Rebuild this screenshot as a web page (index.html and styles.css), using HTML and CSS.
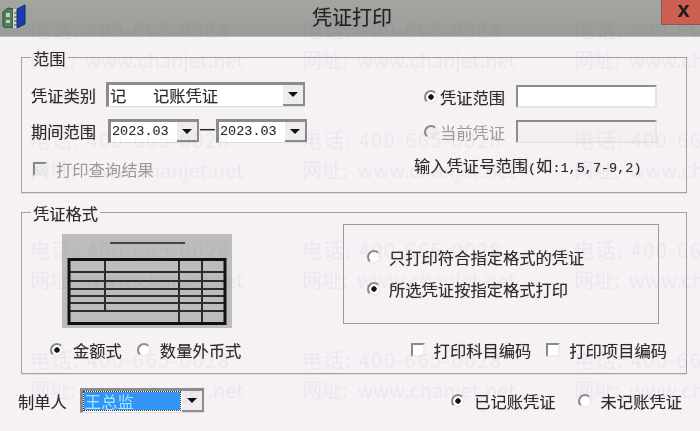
FILE: index.html
```html
<!doctype html>
<html lang="zh-CN">
<head>
    <meta charset="utf-8">
    <title>凭证打印</title>
    <link rel="stylesheet" href="styles.css">
</head>
<body>
<div class="dialog">
    <div class="titlebar">
        <svg class="app-icon" width="24" height="24" viewBox="0 0 24 24">
            <path d="M1 8 L6 4 L11 5 L11 24 L3 24 L1 22 Z" fill="#4f7f5c" stroke="#2c4a34" stroke-width="1"/>
            <path d="M4 9 h4 v4 h-4 z M4 16 h4 v3 h-4 z" fill="#c9cdbd"/>
            <path d="M11 5 L15 5 L15 24 L11 24 Z" fill="#d4d6cc"/>
            <path d="M15 5 L23 1 L23 20 L15 24 Z" fill="#1a3cae" stroke="#12296e" stroke-width="1"/>
            <path d="M12 9 h3 M12 13 h3 M12 17 h3 M12 21 h3" stroke="#444" stroke-width="1"/>
        </svg>
        <span class="title">凭证打印</span>
        <span class="close">x</span>
    </div>

    <fieldset class="group group-range">
        <legend>范围</legend>
        <div class="range-left">
            <div class="field">
                <label class="lbl">凭证类别</label>
                <div class="combo combo-type"><span class="val"><span class="code">记</span>记账凭证</span><span class="arrow"></span></div>
            </div>
            <div class="field">
                <label class="lbl">期间范围</label>
                <div class="combo combo-date"><span class="val num">2023.03</span><span class="arrow"></span></div>
                <span class="dash">一</span>
                <div class="combo combo-date"><span class="val num">2023.03</span><span class="arrow"></span></div>
            </div>
            <div class="opt opt-query disabled"><span class="check"></span>打印查询结果</div>
        </div>
        <div class="range-right">
            <div class="field">
                <div class="opt opt-range"><span class="radio on"></span>凭证范围</div>
                <div class="textbox"></div>
            </div>
            <div class="field">
                <div class="opt opt-range disabled"><span class="radio"></span>当前凭证</div>
                <div class="textbox off"></div>
            </div>
            <div class="hint">输入凭证号范围<span class="num">(</span>如<span class="num">:1,5,7-9,2)</span></div>
        </div>
    </fieldset>

    <fieldset class="group group-format">
        <legend>凭证格式</legend>
        <div class="format-top">
            <svg class="preview" width="170" height="94" viewBox="0 0 170 94">
                <rect width="170" height="94" fill="#bcbcbc"/>
                <path d="M48 9 H123" stroke="#444" stroke-width="2"/>
                <path d="M6 38 H164 M6 47 H164 M6 55 H164 M6 62 H164 M6 69 H164 M6 77 H164" stroke="#2c2c2c" stroke-width="2" fill="none"/>
                <path d="M43 25 V77 M117 25 V89 M140 25 V89" stroke="#2c2c2c" stroke-width="2"/>
                <rect x="7" y="25.5" width="156" height="64" fill="none" stroke="#111" stroke-width="3"/>
            </svg>
            <div class="format-box">
                <div class="opt"><span class="radio"></span>只打印符合指定格式的凭证</div>
                <div class="opt"><span class="radio on"></span>所选凭证按指定格式打印</div>
            </div>
        </div>
        <div class="format-bottom">
            <div class="opt"><span class="radio on"></span>金额式</div>
            <div class="opt"><span class="radio"></span>数量外币式</div>
            <div class="opt push"><span class="check"></span>打印科目编码</div>
            <div class="opt"><span class="check"></span>打印项目编码</div>
        </div>
    </fieldset>

    <div class="footer">
        <label class="lbl">制单人</label>
        <div class="combo combo-user"><span class="val selected">王总监</span><span class="arrow"></span></div>
        <div class="opt push"><span class="radio on"></span>已记账凭证</div>
        <div class="opt"><span class="radio"></span>未记账凭证</div>
    </div>

    <div class="watermark">
        <span>电话: 400-665-0028</span><span>电话: 400-665-0028</span><span>电话: 400-665-0028</span>
        <span class="url">网址: www.chanjet.net</span><span class="url">网址: www.chanjet.net</span><span class="url">网址: www.chanjet.net</span>
        <span>电话: 400-665-0028</span><span>电话: 400-665-0028</span><span>电话: 400-665-0028</span>
        <span class="url">网址: www.chanjet.net</span><span class="url">网址: www.chanjet.net</span><span class="url">网址: www.chanjet.net</span>
        <span>电话: 400-665-0028</span><span>电话: 400-665-0028</span><span>电话: 400-665-0028</span>
        <span class="url">网址: www.chanjet.net</span><span class="url">网址: www.chanjet.net</span><span class="url">网址: www.chanjet.net</span>
        <span>电话: 400-665-0028</span><span>电话: 400-665-0028</span><span>电话: 400-665-0028</span>
        <span class="url">网址: www.chanjet.net</span><span class="url">网址: www.chanjet.net</span><span class="url">网址: www.chanjet.net</span>
    </div>
</div>
</body>
</html>
```

FILE: styles.css
```css
html, body {
    margin: 0;
    height: 100%;
    overflow: hidden;
}

.dialog {
    position: relative;
    width: 700px;
    height: 431px;
    overflow: hidden;
    background: #f5f1f5;
    color: #2b2b2b;
    font-family: "Noto Sans CJK SC", "Liberation Sans", sans-serif;
    font-size: 16.3px;
    line-height: 20px;
    text-shadow: 0 0 1px rgba(0, 0, 0, 0.3);
    filter: blur(0.45px);
}

.num {
    font-family: "Liberation Mono", monospace;
    font-size: 13.5px;
}

/* title bar */
.titlebar {
    display: flex;
    align-items: flex-start;
    height: 37px;
    background: linear-gradient(#a3a5a1, #999c98);
    border-bottom: 1px solid #b9bab9;
    box-sizing: border-box;
}

.app-icon {
    margin: 4px 0 0 2px;
}

.title {
    margin: 7px 0 0 286px;
    font-size: 20px;
    color: #222;
}

.close {
    margin-left: auto;
    width: 39px;
    height: 25px;
    box-sizing: border-box;
    padding-left: 5px;
    background: #cc5f4f;
    border-left: 1px solid #8c5a50;
    border-bottom: 1px solid #8c5a50;
    color: #1c1c1c;
    text-align: center;
    text-shadow: none;
    font: bold 22px/20px "Liberation Sans", sans-serif;
}

/* group boxes */
.group {
    display: flex;
    margin: 9px 13px 0 21px;
    padding: 0 9px;
    border: 1px solid #a2a2a2;
    box-shadow: 0 1px 0 #e0dde0;
    min-width: 0;
}

.group legend {
    padding: 0 2px;
    height: 22px;
    line-height: 24px;
}

.group-range {
    padding-top: 14px;
    padding-bottom: 13px;
}

.group-format {
    display: block;
    margin-top: 8px;
    padding-top: 0;
    padding-bottom: 13px;
}

.range-left {
    width: 383px;
}

.field {
    display: flex;
    align-items: center;
    margin-bottom: 12px;
}

.lbl {
    width: 75px;
    flex: none;
}

/* combos */
.combo {
    display: flex;
    align-items: flex-start;
    flex: none;
    box-sizing: border-box;
    height: 25px;
    background: #fff;
    border: 3px solid #8c8c8c;
    border-right: 0;
    border-bottom: 1px solid #dcdadc;
}

.combo .val {
    flex: 1;
    min-width: 0;
    padding-left: 1px;
    white-space: nowrap;
}

.code {
    display: inline-block;
    width: 43px;
}

.arrow {
    position: relative;
    flex: none;
    width: 22px;
    height: 21px;
    background: #eeecee;
    border-right: 2px solid #8c8c8c;
    border-bottom: 2px solid #8c8c8c;
    box-sizing: border-box;
}

.arrow::after {
    content: "";
    position: absolute;
    left: 5px;
    top: 7px;
    border: 5px solid transparent;
    border-top: 5px solid #111;
    border-bottom: 0;
}

.combo-type {
    width: 199px;
}

.combo-date {
    width: 91px;
    height: 24px;
}

.combo-date .arrow {
    height: 20px;
}

.combo-date:first-of-type {
    margin-left: 2px;
}

.dash {
    align-self: flex-start;
    width: 17px;
    text-align: center;
    overflow: hidden;
}

.combo-user {
    width: 124px;
}

.combo-user .val.selected {
    margin: 1px 2px 0 1px;
    background: #3295f5;
    color: #a8e6ff;
    outline: 1px dotted #333;
    line-height: 18px;
    text-shadow: none;
}

/* options */
.opt {
    display: flex;
    align-items: center;
    white-space: nowrap;
}

.disabled {
    color: #9b9b9b;
    text-shadow: none;
}

.radio, .check {
    flex: none;
    box-sizing: border-box;
    width: 14px;
    height: 14px;
    margin-right: 9px;
    background: #fff;
    border: 2px solid #8a8a8a;
    border-right-color: #ececec;
    border-bottom-color: #ececec;
}

.radio {
    border-radius: 50%;
}

.radio.on {
    background: radial-gradient(circle, #111 0 2.4px, #fff 3px);
}

.disabled .radio, .disabled .check {
    background: #f0edf0;
}

.opt-query {
    margin: 16px 0 0 2px;
}

.range-right {
    flex: 1;
    padding-top: 3px;
}

.opt-range {
    width: 92px;
    margin-left: 10px;
    flex: none;
}

.opt-range .radio {
    margin-right: 2px;
}

.textbox {
    box-sizing: border-box;
    width: 141px;
    height: 23px;
    background: #fff;
    border: 2px solid #8c8c8c;
    border-right-color: #e6e4e6;
    border-bottom-color: #e6e4e6;
}

.textbox.off {
    background: #f3eff3;
}

.hint {
    margin-top: 8px;
    white-space: nowrap;
}

/* format group */
.format-top {
    display: flex;
    align-items: flex-start;
    margin-top: 1px;
}

.preview {
    margin: 10px 0 0 31px;
}

.format-box {
    box-sizing: border-box;
    width: 316px;
    height: 100px;
    margin-left: 111px;
    padding: 22px 0 0 23px;
    border: 1px solid #9a9a9a;
}

.format-box .opt {
    height: 20px;
    margin-bottom: 12px;
}

.format-box .radio {
    margin-right: 8px;
}

.format-bottom {
    display: flex;
    gap: 15px;
    margin: 12px 10px 0 19px;
}

.push {
    margin-left: auto;
}

/* bottom row */
.footer {
    display: flex;
    align-items: center;
    gap: 22px;
    margin: 14px 18px 0 18px;
}

.footer .lbl {
    width: auto;
}

.footer .combo-user {
    margin-left: -9px;
}

/* watermark, lies over the whole dialog */
.watermark {
    position: absolute;
    left: 30px;
    top: 15px;
    display: grid;
    grid-template-columns: repeat(3, 272px);
    grid-template-rows: repeat(4, 30px 80px);
    font-size: 20px;
    line-height: 30px;
    letter-spacing: 1.6px;
    color: rgba(120, 110, 120, 0.065);
    text-shadow: none;
    white-space: nowrap;
    pointer-events: none;
}

.watermark .url {
    letter-spacing: 0;
    word-spacing: 5px;
}
```
